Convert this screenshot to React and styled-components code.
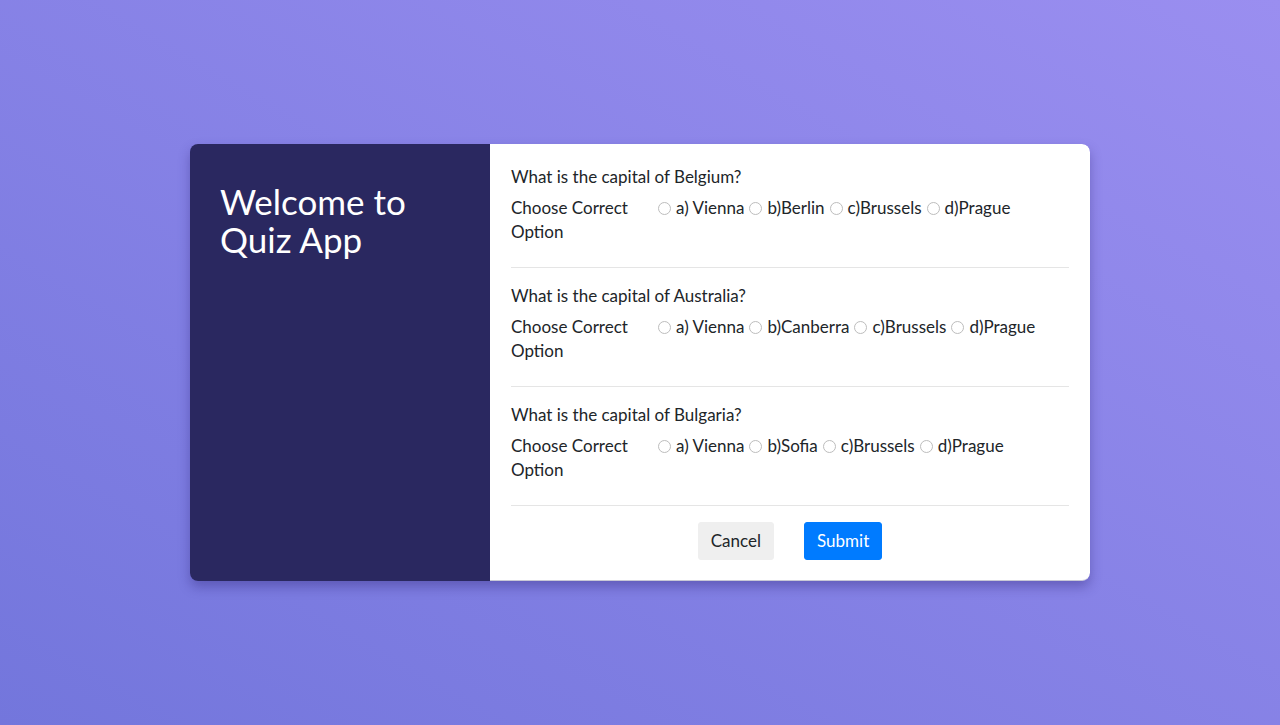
import { createGlobalStyle } from 'styled-components';
import styled from 'styled-components';

const GlobalStyle = createGlobalStyle`
  * {
    box-sizing: border-box;
  }

  body {
    margin: 0;
    font-family: Lato, "Noto Sans", sans-serif;
    color: #212529;
  }
`;

const Page = styled.div`
  display: flex;
  align-items: center;
  justify-content: center;
  width: 100%;
  height: 725px;
  background: linear-gradient(to top right, #7376dc 0%, #9a8ef0 100%);
`;

const Card = styled.div`
  display: flex;
  width: 900px;
  border-radius: 8px;
  overflow: hidden;
  box-shadow: 0 6px 12px rgba(40, 30, 110, 0.35);
`;

const Side = styled.div`
  width: 300px;
  flex-shrink: 0;
  padding: 38px 30px;
  background: #2a2860;
`;

const Title = styled.h1`
  margin: 0;
  font-size: 35px;
  font-weight: 400;
  line-height: 38px;
  color: #ffffff;
`;

const Main = styled.form`
  flex: 1;
  padding: 21px 21px 20px;
  background: #ffffff;
  border-bottom: 1px solid #c9c9d6;
  border-radius: 0 8px 8px 0;
`;

const Question = styled.div`
  font-size: 17px;
  line-height: 24px;
`;

const QuestionText = styled.p`
  margin: 0 0 7px;
`;

const OptionRow = styled.div`
  display: grid;
  grid-template-columns: 142px 1fr;
`;

const OptionLabel = styled.span`
  padding-right: 18px;
`;

const Choices = styled.div`
  display: flex;
  flex-wrap: wrap;
  align-items: flex-start;
`;

const Choice = styled.label`
  display: inline-flex;
  align-items: flex-start;
  white-space: nowrap;

  input {
    appearance: none;
    flex-shrink: 0;
    margin: 6px 5px 0 5px;
    width: 13px;
    height: 13px;
    border: 1px solid #bdbdbd;
    border-radius: 50%;
    background: #ffffff;
  }

  input:checked {
    border: 4px solid #007bff;
  }
`;

const Divider = styled.hr`
  margin: 23px 0 16px;
  border: 0;
  border-top: 1px solid #e5e5e5;
`;

const Actions = styled.div`
  display: flex;
  justify-content: center;
  gap: 30px;
`;

const Button = styled.button`
  padding: 6px 12px;
  border: 1px solid ${({ $primary }) => ($primary ? '#007bff' : '#efefef')};
  border-radius: 3px;
  background: ${({ $primary }) => ($primary ? '#007bff' : '#efefef')};
  color: ${({ $primary }) => ($primary ? '#ffffff' : '#212529')};
  font-family: inherit;
  font-size: 17px;
  line-height: 24px;
  cursor: pointer;
`;

const questions = [
  { id: 'q1', text: 'What is the capital of Belgium?', options: ['a) Vienna', 'b)Berlin', 'c)Brussels', 'd)Prague'] },
  { id: 'q2', text: 'What is the capital of Australia?', options: ['a) Vienna', 'b)Canberra', 'c)Brussels', 'd)Prague'] },
  { id: 'q3', text: 'What is the capital of Bulgaria?', options: ['a) Vienna', 'b)Sofia', 'c)Brussels', 'd)Prague'] },
];

export default function App() {
  return (
    <>
      <GlobalStyle />
      <Page>
        <Card>
          <Side>
            <Title>
              Welcome to
              <br />
              Quiz App
            </Title>
          </Side>
          <Main onSubmit={event => event.preventDefault()}>
            {questions.map(({ id, text, options }) => (
              <Question key={id}>
                <QuestionText>{text}</QuestionText>
                <OptionRow>
                  <OptionLabel>Choose Correct Option</OptionLabel>
                  <Choices>
                    {options.map(option => (
                      <Choice key={option}>
                        <input type="radio" name={id} />
                        {option}
                      </Choice>
                    ))}
                  </Choices>
                </OptionRow>
                <Divider />
              </Question>
            ))}
            <Actions>
              <Button type="button">Cancel</Button>
              <Button type="submit" $primary>
                Submit
              </Button>
            </Actions>
          </Main>
        </Card>
      </Page>
    </>
  );
}
